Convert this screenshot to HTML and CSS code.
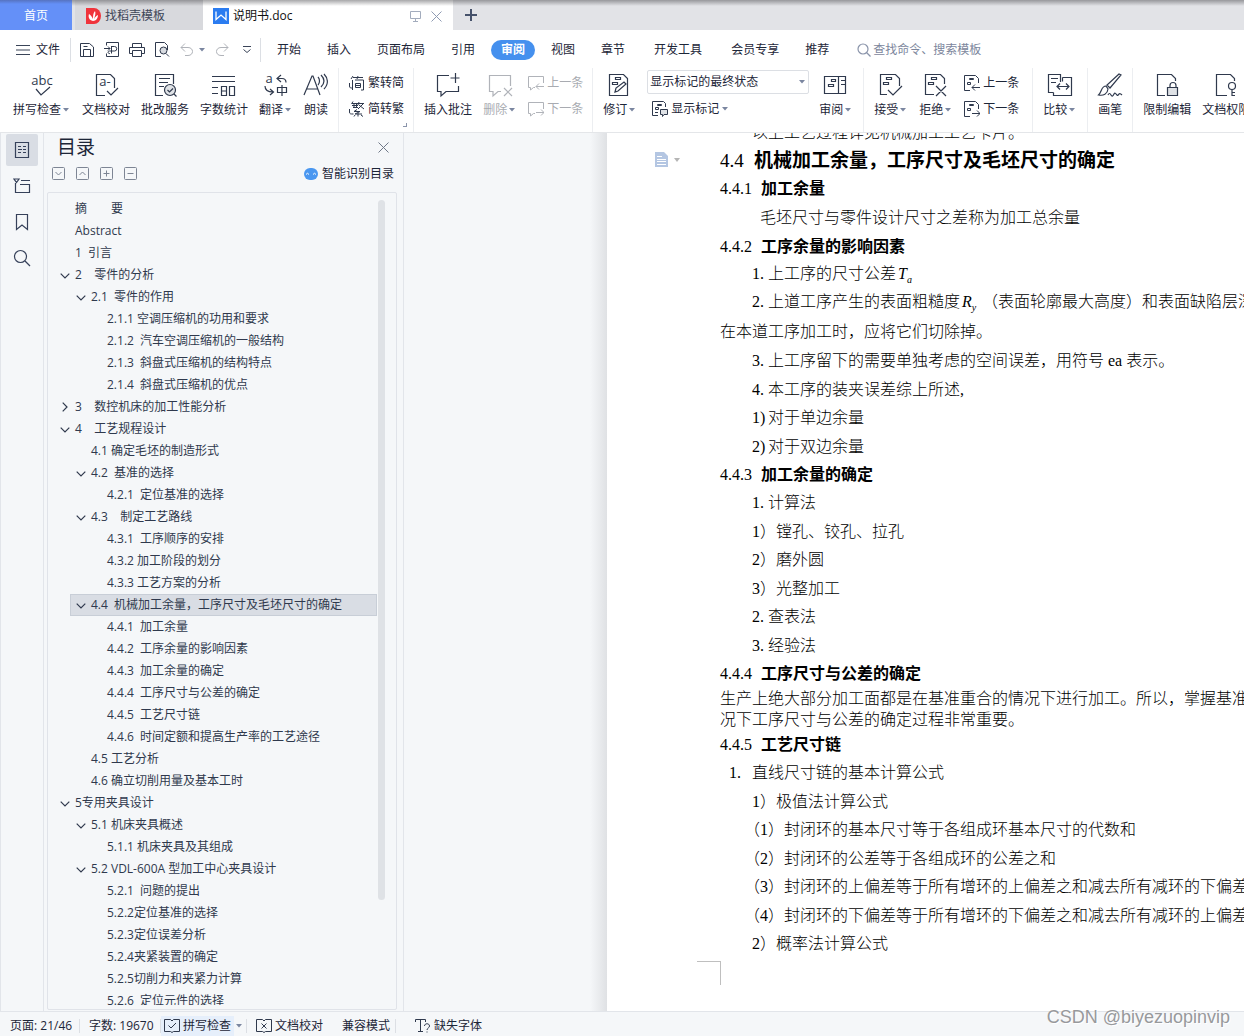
FILE: index.html
```html
<!DOCTYPE html>
<html lang="zh-CN">
<head>
<meta charset="utf-8">
<title>说明书.doc</title>
<link rel="stylesheet" href="styles.css">
</head>
<body>
<svg class="defs" aria-hidden="true">
  <symbol id="caret" viewBox="0 0 6 4"><path d="M0 0h6L3 3.6z" fill="#7a86a0"/></symbol>
  <symbol id="down" viewBox="0 0 10 6"><path d="M.7.7 5 5 9.300.7" fill="none" stroke="#2f394d" stroke-width="1.200"/></symbol>
  <symbol id="right" viewBox="0 0 6 10"><path d="M.7.7 5 5 .7 9.300" fill="none" stroke="#2f394d" stroke-width="1.200"/></symbol>
</svg>

<header class="tabs">
  <button class="tab home">首页</button>
  <button class="tab idle">
    <svg width="15" height="16" viewBox="0 0 15 16"><path d="M0 0h8a7 8 0 0 1 0 16H0z" fill="#f0343c"/><path d="M7 13C3 12 2 9 3 6c2 1 3 3 4 5 0-3 0-6 2-8 1 2 0 5-1 8 1-2 2-3 4-4 0 3-2 6-5 6z" fill="#fff"/></svg>
    找稻壳模板
  </button>
  <div class="tab active">
    <svg width="16" height="16" viewBox="0 0 16 16"><path d="M0 0h16v16H0z" fill="#2b7cf0"/><path d="M3 3.500v8l5-4.500 5 4.500v-8" fill="none" stroke="#fff" stroke-width="1.300"/></svg>
    <span class="tab-name">说明书.doc</span>
    <svg width="11" height="11" viewBox="0 0 11 11" fill="none" stroke="#a3acbd"><path d="M.5.5h10v7H.5zM5.500 7.500v3M3 10.500h5"/></svg>
    <button class="plain" aria-label="关闭标签"><svg width="11" height="11" viewBox="0 0 11 11" fill="none" stroke="#8f9bb3"><path d="m.5.5 10 10M10.500.5l-10 10"/></svg></button>
  </div>
  <button class="plain add" aria-label="新建"><svg width="12" height="12" viewBox="0 0 12 12"><path d="M5 0h2v5h5v2H7v5H5V7H0V5h5z" fill="#46526b"/></svg></button>
</header>

<div class="menu">
  <button class="file"><svg width="14" height="10" viewBox="0 0 14 10" stroke="#3a4458"><path d="M0 .5h14M0 5h14M0 9.500h14"/></svg>文件</button>
  <div class="quick">
    <button class="plain" aria-label="保存"><svg width="16" height="16" viewBox="0 0 16 16" fill="none" stroke="#2f394d"><path d="M1.500 1.500h9l4 3.500v9.500h-13zM4.500 14V7.500h7V14M4.500 4.500h4"/></svg></button>
    <button class="plain" aria-label="输出PDF"><svg width="16" height="16" viewBox="0 0 16 16" fill="none" stroke="#2f394d"><path d="M2.500 3.500v-3h12v14h-12v-3M0 6.500h6M4 4.500l2 2-2 2M7.500 4v7.500M7.500 4.500h3a2 2 0 0 1 0 4.500H5.500c-2 0-2 3 .5 2.500"/></svg></button>
    <button class="plain" aria-label="打印"><svg width="16" height="16" viewBox="0 0 16 16" fill="none" stroke="#2f394d"><path d="M3.500 5V1.500h9V5M3.500 11.500h-3v-6h15v6h-3M3.500 8.500h9v6h-9z"/></svg></button>
    <button class="plain" aria-label="打印预览"><svg width="16" height="16" viewBox="0 0 16 16" fill="none" stroke="#2f394d"><path d="M7 14.500H1.500V.5h9l3 3V8"/><circle cx="9.500" cy="8.500" r="3.500" fill="#d8dbe0"/><path d="m12 11.500 3 3"/></svg></button>
    <button class="plain" aria-label="撤销"><svg width="16" height="16" viewBox="0 0 16 16" fill="none" stroke="#b0b3b9"><path d="M6 1.500 2 5.500l4 4M2 5.500h7c6 0 6 8 0 8H6"/></svg></button>
    <svg class="caret" width="6" height="4"><use href="#caret"/></svg>
    <button class="plain redo" aria-label="恢复"><svg width="16" height="16" viewBox="0 0 16 16" fill="none" stroke="#b0b3b9"><path d="m10 1.500 4 4-4 4M14 5.500H7c-6 0-6 8 0 8h3"/></svg></button>
    <button class="plain" aria-label="更多"><svg width="8" height="8" viewBox="0 0 8 8" fill="none" stroke="#3a4458"><path d="M0 .5h8M.5 3.500 4 6.500l3.500-3"/></svg></button>
  </div>
  <nav class="menus">
    <a href="#">开始</a><a href="#">插入</a><a href="#">页面布局</a><a href="#">引用</a><a href="#" class="on">审阅</a><a href="#">视图</a><a href="#">章节</a><a href="#" class="wide">开发工具</a><a href="#" class="wide">会员专享</a><a href="#">推荐</a>
  </nav>
  <button class="search"><svg width="14" height="14" viewBox="0 0 14 14" fill="none" stroke="#8a94aa" stroke-width="1.200"><circle cx="6" cy="6" r="5"/><path d="m9.500 9.500 4 4"/></svg>查找命令、搜索模板</button>
</div>

<div class="tools">
  <div class="group first">
    <button class="tool"><svg viewBox="0 0 24 24" fill="none" stroke="#2f394d" stroke-width="1.200"><text x="12" y="12" class="abc" text-anchor="middle">abc</text><path d="m6 16 5 6 9-8"/></svg><span>拼写检查<svg class="caret" width="6" height="4"><use href="#caret"/></svg></span></button>
    <button class="tool"><svg viewBox="0 0 24 24" fill="none" stroke="#2f394d" stroke-width="1.200"><path d="M11 22.500H2.500v-21h14l4 4V15"/><text x="11" y="13" class="abc" text-anchor="middle">a-</text><path d="m13 18 4 4 7-7"/></svg><span>文档校对</span></button>
    <button class="tool"><svg viewBox="0 0 24 24" fill="none" stroke="#2f394d" stroke-width="1.200"><path d="M10 22.500H2.500v-21h18V11M6 5.500h11M6 9.500h9M6 13.500h5"/><circle cx="17" cy="17" r="5.500" fill="#dfe2e6"/><path d="m14.500 17 2 2 3.500-3.500M21 21l2.500 2.500"/></svg><span>批改服务</span></button>
    <button class="tool"><svg viewBox="0 0 24 24" fill="none" stroke="#2f394d" stroke-width="1.200"><path d="M0 3.500h23M0 8.500h23M0 14.500h6M0 20.500h6M9.500 13.500h5v9h-5zM17.500 13.500h5v9h-5zM9.500 18h5"/></svg><span>字数统计</span></button>
    <button class="tool"><svg viewBox="0 0 24 24" fill="none" stroke="#2f394d" stroke-width="1.200"><text x="5" y="10" class="abc" text-anchor="middle">a</text><path d="M17 2l-4 3.500 4 3.500M13 5.500h5c3 0 4 2 4 4M1 13c0 4 2 6 8 6M6 16l3.500 3L6 22M13.500 14.500h9v5h-9zM18 12v11"/></svg><span>翻译<svg class="caret" width="6" height="4"><use href="#caret"/></svg></span></button>
    <button class="tool"><svg viewBox="0 0 24 24" fill="none" stroke="#2f394d" stroke-width="1.200"><path d="M0 22 8 3h1l7 19M3 16h11M14 4c2 2 2 6 0 8M17 2c4 4 4 8 0 12M20 1c4 4 5 10 0 15"/></svg><span>朗读</span></button>
  </div>
  <div class="group tight corner">
    <div class="stack">
      <button class="mini"><svg viewBox="0 0 16 16" fill="none" stroke="#2f394d"><path d="M4.500 5v10M5 1 3 4M5 2.500h4M10 1 9 4M10 2.500h5M7 5h8.500v10H13M7.500 8.500h5v4h-5zM7.500 10.500h5M1.500 8v3c0 2 1 2 3 2"/></svg>繁转简</button>
      <button class="mini"><svg viewBox="0 0 16 16" fill="none" stroke="#2f394d"><path d="M5 .5 3.500 3M4 2.500h6M4 4.500h6M5 6.500h5M6 2v5M8.500 2v5M11 1l-1 3M11 2.500h5M15 3l-5 5M11 4l5 4M9 8.500 6 10.500h6l-5 2.500h7M10 12v3.500M7 14l-1 1.500M13 14l2 1.500M1.500 8v3c0 2 1 2 4 2"/></svg>简转繁</button>
    </div>
  </div>
  <div class="group tight">
    <button class="tool"><svg viewBox="0 0 24 24" fill="none" stroke="#2f394d" stroke-width="1.200"><path d="M13 2.500H1.500v16H5V23l5-4.500h12.500V13M19.500 0v10M14.500 5h9"/></svg><span>插入批注</span></button>
    <button class="tool off"><svg viewBox="0 0 24 24" fill="none" stroke="#b0b3b9" stroke-width="1.200"><path d="M13 18.500h-3L5 23v-4.500H1.500v-16h21V13M16 15l8 8M24 15l-8 8"/></svg><span>删除<svg class="caret" width="6" height="4"><use href="#caret"/></svg></span></button>
    <div class="stack">
      <button class="mini off"><svg viewBox="0 0 16 16" fill="none" stroke="#b0b3b9"><path d="M7 12.500H5.500L2.500 15v-2.500H.5V1.500h15V8M16 11.500H8M11 8.500l-3 3 3 3"/></svg>上一条</button>
      <button class="mini off"><svg viewBox="0 0 16 16" fill="none" stroke="#b0b3b9"><path d="M7 12.500H5.500L2.500 15v-2.500H.5V1.500h15V8M8 11.500h8M13 8.500l3 3-3 3"/></svg>下一条</button>
    </div>
  </div>
  <div class="group close">
    <button class="tool"><svg viewBox="0 0 24 24" fill="none" stroke="#2f394d" stroke-width="1.200"><path d="M1.500 1.500h14l4 4v17h-18zM7.500 4.500h5v2h-5zM4.500 9.500h5v2h-5zM7 19l1-4 8-6 2 2-8 7z"/></svg><span>修订<svg class="caret" width="6" height="4"><use href="#caret"/></svg></span></button>
    <div class="stack">
      <div class="select"><select aria-label="显示状态"><option>显示标记的最终状态</option></select><svg width="6" height="4"><use href="#caret"/></svg></div>
      <button class="mini show"><svg viewBox="0 0 16 16" fill="none" stroke="#2f394d"><path d="M6 14.500H.5V.5h11l2 2V6M5.500 3.500h4v1h-4zM3.500 6.500h3v2h-3zM3 11.500h3"/><path d="M8.500 8.500h7v5H12l-1.500 2v-2h-2z" fill="#dfe2e6"/></svg>显示标记<svg class="caret" width="6" height="4"><use href="#caret"/></svg></button>
    </div>
    <button class="tool"><svg viewBox="0 0 24 24" fill="none" stroke="#2f394d" stroke-width="1.200"><path d="M.5 3.500h21v17H.5zM14.500 3.500v17M17 7.500h4M17 11.500h4M7.500 6.500h4v2h-4zM4.500 11.500h5v2h-5z"/></svg><span>审阅<svg class="caret" width="6" height="4"><use href="#caret"/></svg></span></button>
  </div>
  <div class="group last-wide">
    <button class="tool"><svg viewBox="0 0 24 24" fill="none" stroke="#2f394d" stroke-width="1.200"><path d="M8 21.500H1.500v-20h15l4 4V13M7.500 4.500h5v2h-5zM4.500 9.500h5v2h-5zM9 17l5 5 9-9"/></svg><span>接受<svg class="caret" width="6" height="4"><use href="#caret"/></svg></span></button>
    <button class="tool"><svg viewBox="0 0 24 24" fill="none" stroke="#2f394d" stroke-width="1.200"><path d="M10 21.500H1.500v-20h15l4 4V11M7.500 4.500h5v2h-5zM4.500 9.500h5v2h-5zM12 13l10 10M22 13 12 23"/></svg><span>拒绝<svg class="caret" width="6" height="4"><use href="#caret"/></svg></span></button>
    <div class="stack">
      <button class="mini"><svg viewBox="0 0 16 16" fill="none" stroke="#2f394d"><path d="M6 15.500H.5V.5h11l3 3V8M5.500 3.500h4v1h-4zM3.500 7.500h3v2h-3zM16 12.500H8M11 9.500l-3 3 3 3"/></svg>上一条</button>
      <button class="mini"><svg viewBox="0 0 16 16" fill="none" stroke="#2f394d"><path d="M6 15.500H.5V.5h11l3 3V8M5.500 3.500h4v1h-4zM3.500 7.500h3v2h-3zM8 12.500h8M13 9.500l3 3-3 3"/></svg>下一条</button>
    </div>
  </div>
  <div class="group">
    <button class="tool"><svg viewBox="0 0 24 24" fill="none" stroke="#2f394d" stroke-width="1.200"><path d="M12.500 4V1.500H.5v18h5M14.500 4.500h9v18h-18v-3M12.500 4v5M14.500 4.500v4M3 5.500h7M3 9.500h5M9 13.500h12M12 10.500l-3 3 3 3M18 10.500l3 3-3 3"/></svg><span>比较<svg class="caret" width="6" height="4"><use href="#caret"/></svg></span></button>
  </div>
  <div class="group">
    <button class="tool"><svg viewBox="0 0 24 24" fill="none" stroke="#2f394d" stroke-width="1.200"><path d="M21 1 9 12l3 3L23 2zM8 13c-5 0-4 6-7.500 9 5 1 9-1 9.500-6zM10 22c1-2 2-2 3 0s2 1 3-1 2 0 3 1 1 0 2-1 2 0 3 1"/></svg><span>画笔</span></button>
  </div>
  <div class="group">
    <button class="tool"><svg viewBox="0 0 24 24" fill="none" stroke="#2f394d" stroke-width="1.200"><path d="M10 22.500H2.500v-21h14l4 4V8M15 14.500v-2c0-4 6-4 6 0v2"/><path d="M12.500 14.500h10v8h-10z" fill="#dfe2e6"/></svg><span>限制编辑</span></button>
    <button class="tool"><svg viewBox="0 0 24 24" fill="none" stroke="#2f394d" stroke-width="1.200"><path d="M13 22.500H2.500v-21h14l4 4V8"/><circle cx="18" cy="13" r="3.500"/><path d="M18 16.500V23M18 19.500h3M18 22.500h3"/></svg><span>文档权限</span></button>
  </div>
</div>

<main class="work">
  <aside class="rail">
    <button class="current" aria-label="目录"><svg width="16" height="18" viewBox="0 0 16 18" fill="none" stroke="#36415a" stroke-width="1.200"><path d="M1.500 1.500h13v15h-13zM4 5.500h3M9 5.500h3M4 8.500h4M9 8.500h3M4 11.500h3M9 11.500h3"/></svg></button>
    <button aria-label="章节"><svg width="18" height="16" viewBox="0 0 18 16" fill="none" stroke="#36415a" stroke-width="1.200"><path d="M1 1h5L3.500 4.500zM8 2.500h9M2.500 5v9.500h14v-8H7"/></svg></button>
    <button aria-label="书签"><svg width="14" height="18" viewBox="0 0 14 18" fill="none" stroke="#36415a" stroke-width="1.200"><path d="M1.500 1.500h11v15L7 12l-5.500 4.500z"/></svg></button>
    <button aria-label="查找"><svg width="18" height="18" viewBox="0 0 18 18" fill="none" stroke="#36415a" stroke-width="1.200"><circle cx="7.500" cy="7.500" r="6"/><path d="m12 12 5 5"/></svg></button>
  </aside>

  <section class="panel">
    <div class="panel-head">
      <h1>目录</h1>
      <button class="plain" aria-label="关闭目录"><svg width="11" height="11" viewBox="0 0 11 11" fill="none" stroke="#6f7888"><path d="m.5.5 10 10M10.500.5l-10 10"/></svg></button>
    </div>
    <div class="panel-tools">
      <button class="plain" aria-label="展开"><svg width="13" height="13" viewBox="0 0 13 13" fill="none" stroke="#7d8594"><rect x=".5" y=".5" width="12" height="12" rx="1"/><path d="m3.500 5 3 3 3-3"/></svg></button>
      <button class="plain" aria-label="收起"><svg width="13" height="13" viewBox="0 0 13 13" fill="none" stroke="#7d8594"><rect x=".5" y=".5" width="12" height="12" rx="1"/><path d="m3.500 8 3-3 3 3"/></svg></button>
      <button class="plain" aria-label="增加级别"><svg width="13" height="13" viewBox="0 0 13 13" fill="none" stroke="#7d8594"><rect x=".5" y=".5" width="12" height="12" rx="1"/><path d="M3.500 6.500h6M6.500 3.500v6"/></svg></button>
      <button class="plain" aria-label="减少级别"><svg width="13" height="13" viewBox="0 0 13 13" fill="none" stroke="#7d8594"><rect x=".5" y=".5" width="12" height="12" rx="1"/><path d="M3.500 6.500h6"/></svg></button>
      <button class="smart"><svg width="14" height="12" viewBox="0 0 14 12"><rect width="14" height="12" rx="6" fill="#4a97f0"/><path d="M2 6.500q1.500-2.500 3 0M9 6.500q1.500-2.500 3 0" fill="none" stroke="#fff"/></svg>智能识别目录</button>
    </div>
    <div class="tree-box">
      <ul class="tree">
        <li><a href="#">摘　　要</a></li>
        <li><a href="#">Abstract</a></li>
        <li><a href="#">1  引言</a></li>
        <li><svg><use href="#down"/></svg><a href="#">2    零件的分析</a></li>
        <li class="l2"><svg><use href="#down"/></svg><a href="#">2.1  零件的作用</a></li>
        <li class="l3"><a href="#">2.1.1 空调压缩机的功用和要求</a></li>
        <li class="l3"><a href="#">2.1.2  汽车空调压缩机的一般结构</a></li>
        <li class="l3"><a href="#">2.1.3  斜盘式压缩机的结构特点</a></li>
        <li class="l3"><a href="#">2.1.4  斜盘式压缩机的优点</a></li>
        <li class="shut"><svg><use href="#right"/></svg><a href="#">3    数控机床的加工性能分析</a></li>
        <li><svg><use href="#down"/></svg><a href="#">4    工艺规程设计</a></li>
        <li class="l2"><a href="#">4.1 确定毛坯的制造形式</a></li>
        <li class="l2"><svg><use href="#down"/></svg><a href="#">4.2  基准的选择</a></li>
        <li class="l3"><a href="#">4.2.1  定位基准的选择</a></li>
        <li class="l2"><svg><use href="#down"/></svg><a href="#">4.3    制定工艺路线</a></li>
        <li class="l3"><a href="#">4.3.1  工序顺序的安排</a></li>
        <li class="l3"><a href="#">4.3.2 加工阶段的划分</a></li>
        <li class="l3"><a href="#">4.3.3 工艺方案的分析</a></li>
        <li class="l2 chosen"><svg><use href="#down"/></svg><a href="#">4.4  机械加工余量，工序尺寸及毛坯尺寸的确定</a></li>
        <li class="l3"><a href="#">4.4.1  加工余量</a></li>
        <li class="l3"><a href="#">4.4.2  工序余量的影响因素</a></li>
        <li class="l3"><a href="#">4.4.3  加工余量的确定</a></li>
        <li class="l3"><a href="#">4.4.4  工序尺寸与公差的确定</a></li>
        <li class="l3"><a href="#">4.4.5  工艺尺寸链</a></li>
        <li class="l3"><a href="#">4.4.6  时间定额和提高生产率的工艺途径</a></li>
        <li class="l2"><a href="#">4.5 工艺分析</a></li>
        <li class="l2"><a href="#">4.6 确立切削用量及基本工时</a></li>
        <li><svg><use href="#down"/></svg><a href="#">5专用夹具设计</a></li>
        <li class="l2"><svg><use href="#down"/></svg><a href="#">5.1 机床夹具概述</a></li>
        <li class="l3"><a href="#">5.1.1 机床夹具及其组成</a></li>
        <li class="l2"><svg><use href="#down"/></svg><a href="#">5.2 VDL-600A 型加工中心夹具设计</a></li>
        <li class="l3"><a href="#">5.2.1  问题的提出</a></li>
        <li class="l3"><a href="#">5.2.2定位基准的选择</a></li>
        <li class="l3"><a href="#">5.2.3定位误差分析</a></li>
        <li class="l3"><a href="#">5.2.4夹紧装置的确定</a></li>
        <li class="l3"><a href="#">5.2.5切削力和夹紧力计算</a></li>
        <li class="l3"><a href="#">5.2.6  定位元件的选择</a></li>
      </ul>
      <div class="track"><div class="thumb"></div></div>
    </div>
  </section>

  <div class="canvas">
    <article class="page">
      <div class="anchor"><svg width="13" height="15" viewBox="0 0 13 15"><path d="M0 0h9l4 4v11H0z" fill="#b4c6e2"/><path d="M2 4.500h5M2 7.500h9M2 9.500h9M2 12.500h9" stroke="#fff"/></svg><svg width="6" height="4" viewBox="0 0 6 4"><path d="M0 0h6L3 4z" fill="#b5b5b5"/></svg></div>
      <section class="cut"><p class="in">以上工艺过程详见机械加工工艺卡片。</p></section>
      <section>
        <h2><span class="no">4.4</span>机械加工余量，工序尺寸及毛坯尺寸的确定</h2>
      </section>
      <section>
        <h3><span class="no">4.4.1</span>加工余量</h3>
        <p class="first-line">毛坯尺寸与零件设计尺寸之差称为加工总余量</p>
      </section>
      <section>
        <h3 class="roomy"><span class="no">4.4.2</span>工序余量的影响因素</h3>
        <p class="in low"><span class="m">1.</span>上工序的尺寸公差<i class="var">T<sub>a</sub></i></p>
        <p class="tall"><span class="in"><span class="m">2.</span>上道工序产生的表面粗糙度<i class="var">R<sub>y</sub></i>（表面轮廓最大高度）和表面缺陷层深度</span><br>在本道工序加工时，应将它们切除掉。</p>
        <p class="in">
          <span class="m">3.</span>上工序留下的需要单独考虑的空间误差，用符号 ea 表示。</p>
        <p class="in roomy"><span class="m">4.</span>本工序的装夹误差综上所述<span lang="en">,</span></p>
        <p class="in"><span class="m">1)</span>对于单边余量</p>
        <p class="in roomy"><span class="m">2)</span>对于双边余量</p>
      </section>
      <section>
        <h3><span class="no">4.4.3</span>加工余量的确定</h3>
        <p class="in"><span class="m">1.</span>计算法</p>
        <p class="in roomy">1）镗孔、铰孔、拉孔</p>
        <p class="in">2）磨外圆</p>
        <p class="in roomy">3）光整加工</p>
        <p class="in"><span class="m">2.</span>查表法</p>
        <p class="in roomy"><span class="m">3.</span>经验法</p>
      </section>
      <section>
        <h3><span class="no">4.4.4</span>工序尺寸与公差的确定</h3>
        <p class="solid">生产上绝大部分加工面都是在基准重合的情况下进行加工。所以，掌握基准重合情<br>况下工序尺寸与公差的确定过程非常重要。</p>
      </section>
      <section>
        <h3 class="roomy"><span class="no">4.4.5</span>工艺尺寸链</h3>
        <p class="item"><span class="m">1.</span>直线尺寸链的基本计算公式</p>
        <p class="in roomy">1）极值法计算公式</p>
        <p class="half">（1）封闭环的基本尺寸等于各组成环基本尺寸的代数和</p>
        <p class="half roomy">（2）封闭环的公差等于各组成环的公差之和</p>
        <p class="half">（3）封闭环的上偏差等于所有增环的上偏差之和减去所有减环的下偏差之和</p>
        <p class="half roomy">（4）封闭环的下偏差等于所有增环的下偏差之和减去所有减环的上偏差之和</p>
        <p class="in">2）概率法计算公式</p>
      </section>
      <div class="crop"></div>
    </article>
  </div>
</main>

<footer class="status">
  <span class="cell">页面: 21/46</span>
  <span class="cell count">字数: 19670</span>
  <button class="spell"><svg width="16" height="14" viewBox="0 0 16 14" fill="none" stroke="#2f394d"><path d="M.5.5h6L8 2 9.500.5h6v12h-6L8 13.500 6.500 12.500h-6zM4.500 6.500 7 9l5-5"/></svg>拼写检查</button>
  <span class="cell drop"><svg width="6" height="4"><use href="#caret"/></svg></span>
  <button class="proof"><svg width="16" height="14" viewBox="0 0 16 14" fill="none" stroke="#2f394d"><path d="M.5.5h6L8 2 9.500.5h6v12h-6L8 13.500 6.500 12.500h-6zM5.500 4.500l5 5M10.500 4.500l-5 5"/></svg>文档校对</button>
  <span class="cell mode">兼容模式</span>
  <button class="fonts"><svg width="16" height="14" viewBox="0 0 16 14" fill="none" stroke="#2f394d"><path d="M.5 3V.5h10V3M5.500.5v12M3 12.500h5M9.500 7c0-3 5-3 5 0 0 2-2.500 2-2.500 4M12 12.500v1"/></svg>缺失字体</button>
  <span class="mark">CSDN @biyezuopinvip</span>
</footer>
</body>
</html>
```
FILE: styles.css
```css
* { box-sizing: border-box; }

body {
  margin: 0;
  height: 100vh;
  display: flex;
  flex-direction: column;
  overflow: hidden;
  background: #fff;
  color: #1d2638;
  font: 12px/18px "Open Sans", "Noto Sans CJK SC", sans-serif;
}

button, select { font: inherit; color: inherit; margin: 0; }
button { padding: 0; border: 0; background: none; white-space: nowrap; }
a { color: inherit; text-decoration: none; }
svg { display: block; flex: none; }
.defs { position: absolute; width: 0; height: 0; }
h1, h2, h3, p, ul { margin: 0; padding: 0; }

/* document tabs */
.tabs {
  flex: none;
  display: flex;
  height: 30px;
  background: linear-gradient(rgba(90, 90, 94, .55), rgba(120, 120, 124, 0) 6px), #e2e3e7;
}
.tab { display: flex; align-items: center; gap: 4px; padding-top: 2px; }
.home { width: 72px; justify-content: center; color: #fff; background: linear-gradient(rgba(60, 60, 90, .35), rgba(60, 60, 90, 0) 4px), #6490f8; }
.idle { width: 128px; margin-left: 3px; padding-left: 11px; color: #3e4658; background: linear-gradient(rgba(80, 80, 84, .5), rgba(120, 120, 124, 0) 6px), #d8d9dd; }
.active { width: 250px; padding: 2px 11px 0 10px; color: #111; background: linear-gradient(rgba(80, 80, 84, .5), rgba(255, 255, 255, 0) 6px), #fff; }
.tab-name { flex: 1; }
.active .plain { margin-left: 6px; }
.add { margin-left: 12px; }

/* menu row */
.menu { flex: none; display: flex; align-items: center; height: 38px; padding-top: 1px; }
.file { display: flex; align-items: center; gap: 6px; width: 71px; height: 24px; padding-left: 16px; border-right: 1px solid #dcdfe4; }
.quick { display: flex; align-items: center; gap: 9px; width: 190px; height: 24px; padding-left: 8px; border-right: 1px solid #dcdfe4; }
.quick .caret { margin: 0 -5px; }
.quick .redo { margin: 0 4px 0 5px; }
.menus { display: flex; align-items: center; padding-left: 3px; }
.menus a { padding: 0 13px; white-space: nowrap; }
.menus a.wide { padding-left: 16px; }
.menus a.on { margin: 0 3px; padding: 1px 10px; border-radius: 10px; background: #4590ee; color: #fff; font-weight: 700; }
.search { display: flex; align-items: center; gap: 2px; margin-left: 15px; color: #7c869c; }

/* ribbon */
.tools { flex: none; display: flex; height: 64px; overflow: hidden; }
.group { flex: none; display: flex; gap: 11px; padding: 0 10px; border-right: 1px solid #eceef1; }
.first { padding-left: 13px; }
.tight { padding-right: 9px; }
.close { gap: 10px; }
.last-wide { padding-right: 13px; }
.corner { padding-left: 9px; background: linear-gradient(#8a94aa, #8a94aa) right 6px bottom 5px / 4px 1px no-repeat, linear-gradient(#8a94aa, #8a94aa) right 6px bottom 5px / 1px 4px no-repeat; }
.corner .mini { gap: 4px; }
.tool { display: flex; flex-direction: column; align-items: center; gap: 4px; padding-top: 5px; }
.tool > svg { width: 24px; height: 24px; overflow: visible; }
.tool > span { display: flex; align-items: center; }
.tool .caret { margin: 0 2px; }
.abc { font-size: 13px; fill: #2f394d; stroke: none; }
.off { color: #a8abb1; }
.stack { display: flex; flex-direction: column; padding-top: 2px; }
.mini { display: flex; align-items: center; gap: 3px; height: 26px; }
.mini > svg:first-child { width: 16px; height: 16px; }
.show { padding-left: 5px; }
.select { position: relative; width: 162px; height: 24px; margin-bottom: 2px; }
.select select { appearance: none; width: 100%; height: 24px; padding: 0 20px 0 2px; border: 1px solid #dcdfe4; border-radius: 2px; background: #fff; }
.select svg { position: absolute; right: 4px; top: 10px; }

/* working area */
.work { flex: 1; min-height: 0; display: flex; background: #f5f7f9; border-top: 1px solid #e4e6e9; }
.rail { flex: none; display: flex; flex-direction: column; align-items: center; gap: 4px; width: 44px; padding-top: 1px; border: solid #e2e5ea; border-width: 0 1px; }
.rail button { display: flex; align-items: center; justify-content: center; width: 32px; height: 32px; border-radius: 2px; }
.rail .current { background: #d9dde4; }

.panel { flex: none; display: flex; flex-direction: column; width: 360px; padding: 0 6px 1px 3px; border-right: 1px solid #e2e5ea; }
.panel-head { display: flex; align-items: center; justify-content: space-between; height: 28px; padding: 0 8px 0 10px; }
.panel-head h1 { font-size: 19px; line-height: 28px; font-weight: 400; }
.panel-tools { display: flex; align-items: center; gap: 11px; height: 25px; padding: 0 3px 0 5px; }
.smart { display: flex; align-items: center; gap: 4px; margin-left: auto; }
.tree-box { flex: 1; min-height: 0; display: flex; margin-top: 6px; padding: 5px 0 4px; border: 1px solid #e0e3e9; border-radius: 2px; }
.tree { flex: 1; min-width: 0; overflow: hidden; list-style: none; }
.tree li { position: relative; height: 22px; margin-left: 6px; padding-left: 21px; line-height: 22px; }
.tree a { display: block; white-space: pre; color: #2f394d; }
.tree li.l2 { margin-left: 22px; }
.tree li.l3 { margin-left: 38px; }
.tree li svg { position: absolute; left: 6px; top: 9px; width: 10px; height: 6px; }
.tree li.shut svg { left: 8px; top: 6px; width: 6px; height: 10px; }
.tree li.chosen { background: #d9dde4; box-shadow: inset 0 0 0 1px #c8ced7; }
.track { width: 19px; padding: 2px 0 0 1px; }
.thumb { width: 7px; height: 87%; border-radius: 4px; background: #dfe2e6; }

.canvas { flex: 1; min-width: 0; display: flex; overflow: hidden; padding-left: 203px; background: linear-gradient(to right, #f5f7f9, #dfe1e4) 186px 0 / 17px 100% no-repeat; }

/* document */
.page { position: relative; flex: 1; min-width: 0; padding-left: 113px; overflow: hidden; background: #fff; color: #000; font: 16px/28px "Liberation Serif", "Noto Sans CJK SC", serif; font-weight: 300; white-space: nowrap; }
.anchor { position: absolute; left: 48px; top: 19px; display: flex; align-items: center; gap: 6px; }
.cut { margin-top: -14px; }
.page h2 { font-size: 19px; line-height: 28px; font-weight: 700; }
.page h3 { font-size: 16px; line-height: 28px; font-weight: 700; }
.no { display: inline-block; width: 41px; font-weight: 400; }
h2 .no { width: 34px; }
.page .roomy { line-height: 29px; }
.first-line { padding-left: 40px; line-height: 29px; }
.in { padding-left: 32px; }
.half { padding-left: 24px; }
.item { padding-left: 9px; }
.m { display: inline-block; width: 16px; }
.item .m { width: 23px; }
.low { line-height: 26px; }
.tall { line-height: 30px; }
.solid { line-height: 21px; }
.var { display: inline-block; width: 22px; padding-left: 2px; line-height: 20px; }
.var sub { font-size: 10px; line-height: 0; }
.crop { width: 24px; height: 24px; margin: 3px 0 0 -23px; border: solid #bfbfbf; border-width: 1px 1px 0 0; }

/* status bar */
.status { position: relative; flex: none; display: flex; align-items: center; height: 25px; padding: 4px 0 0 10px; background: #f5f7f9; border-top: 1px solid #e2e5ea; white-space: nowrap; }
.cell { display: flex; align-items: center; height: 14px; border-right: 1px solid #dcdfe4; }
.status .cell { width: 70px; }
.status .count { width: 81px; padding-left: 9px; }
.status button { display: flex; align-items: center; gap: 3px; }
.status .spell { width: 73px; height: 20px; padding-left: 3px; background: #e6effb; }
.status .drop { width: 13px; padding-left: 2px; }
.status .proof { padding-left: 9px; }
.status .mode { width: 73px; padding-left: 19px; }
.status .fonts { padding-left: 19px; }
.mark { position: absolute; right: 14px; bottom: 8px; color: #98999c; font: 18px/22px "Liberation Sans", sans-serif; text-shadow: 1px 1px 0 #fff; }
```
